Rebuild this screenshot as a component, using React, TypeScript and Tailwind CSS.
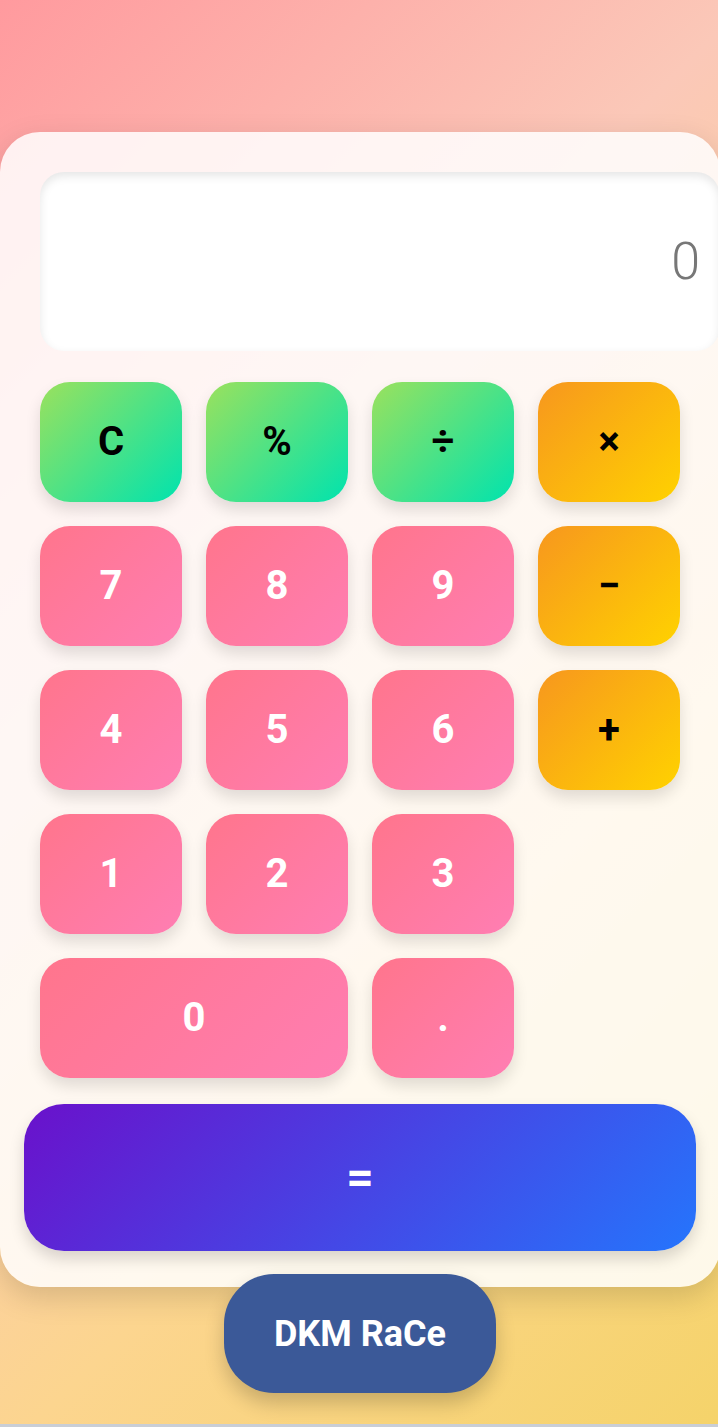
import React from "react";

const green = "bg-[linear-gradient(135deg,#9be15d,#00e3ae)] text-black";
const orange = "bg-[linear-gradient(135deg,#f7971e,#ffd200)] text-black";
const pink = "bg-[linear-gradient(135deg,#ff758c,#ff7eb3)] text-white";

function Key({ label, cls, span }: { label: string; cls: string; span?: boolean }) {
  return (
    <button
      className={`h-[120px] rounded-[30px] ${cls} ${span ? "col-span-2" : ""} flex items-center justify-center text-[40px] font-bold leading-none shadow-[0_8px_15px_rgba(0,0,0,0.12)]`}
    >
      {label}
    </button>
  );
}

export default function App() {
  return (
    <div className="w-[718px] min-h-[1427px] bg-[#c9ced6] overflow-hidden" style={{ fontFamily: "Roboto, 'Liberation Sans', sans-serif" }}>
      <div className="h-[1424px] w-[718px] bg-[linear-gradient(135deg,#ff9a9e_0%,#fbc8b8_35%,#fcd58f_68%,#f5d36a_100%)] pt-[132px]">
        <div className="w-[720px] flex flex-col items-center">
          <div className="w-[720px] rounded-[40px] bg-white/85 pt-[40px] pb-[36px] pl-[40px] shadow-[0_10px_30px_rgba(0,0,0,0.15)]">
            <div className="h-[179px] w-[680px] rounded-[24px] bg-white shadow-[inset_0_4px_10px_rgba(0,0,0,0.1)] flex items-center justify-end pr-[20px] text-[52px] font-light text-[#777]">
              0
            </div>
            <div className="mt-[31px] grid w-[640px] grid-cols-4 gap-[24px]">
              <Key label="C" cls={green} />
              <Key label="%" cls={green} />
              <Key label="÷" cls={green} />
              <Key label="×" cls={orange} />
              <Key label="7" cls={pink} />
              <Key label="8" cls={pink} />
              <Key label="9" cls={pink} />
              <Key label="−" cls={orange} />
              <Key label="4" cls={pink} />
              <Key label="5" cls={pink} />
              <Key label="6" cls={pink} />
              <Key label="+" cls={orange} />
              <Key label="1" cls={pink} />
              <Key label="2" cls={pink} />
              <Key label="3" cls={pink} />
              <div />
              <Key label="0" cls={pink} span />
              <Key label="." cls={pink} />
            </div>
            <button className="-ml-[16px] mt-[26px] flex h-[147px] w-[672px] items-center justify-center rounded-[40px] bg-[linear-gradient(135deg,#6a11cb,#2575fc)] text-[48px] font-bold text-white shadow-[0_8px_15px_rgba(0,0,0,0.15)]">
              =
            </button>
          </div>
          <button className="relative z-10 -mt-[13px] flex h-[119px] w-[272px] items-center justify-center rounded-[50px] bg-[#3b5998] text-[36px] font-bold text-white shadow-[0_10px_20px_rgba(0,0,0,0.2)]">
            DKM RaCe
          </button>
        </div>
      </div>
    </div>
  );
}
